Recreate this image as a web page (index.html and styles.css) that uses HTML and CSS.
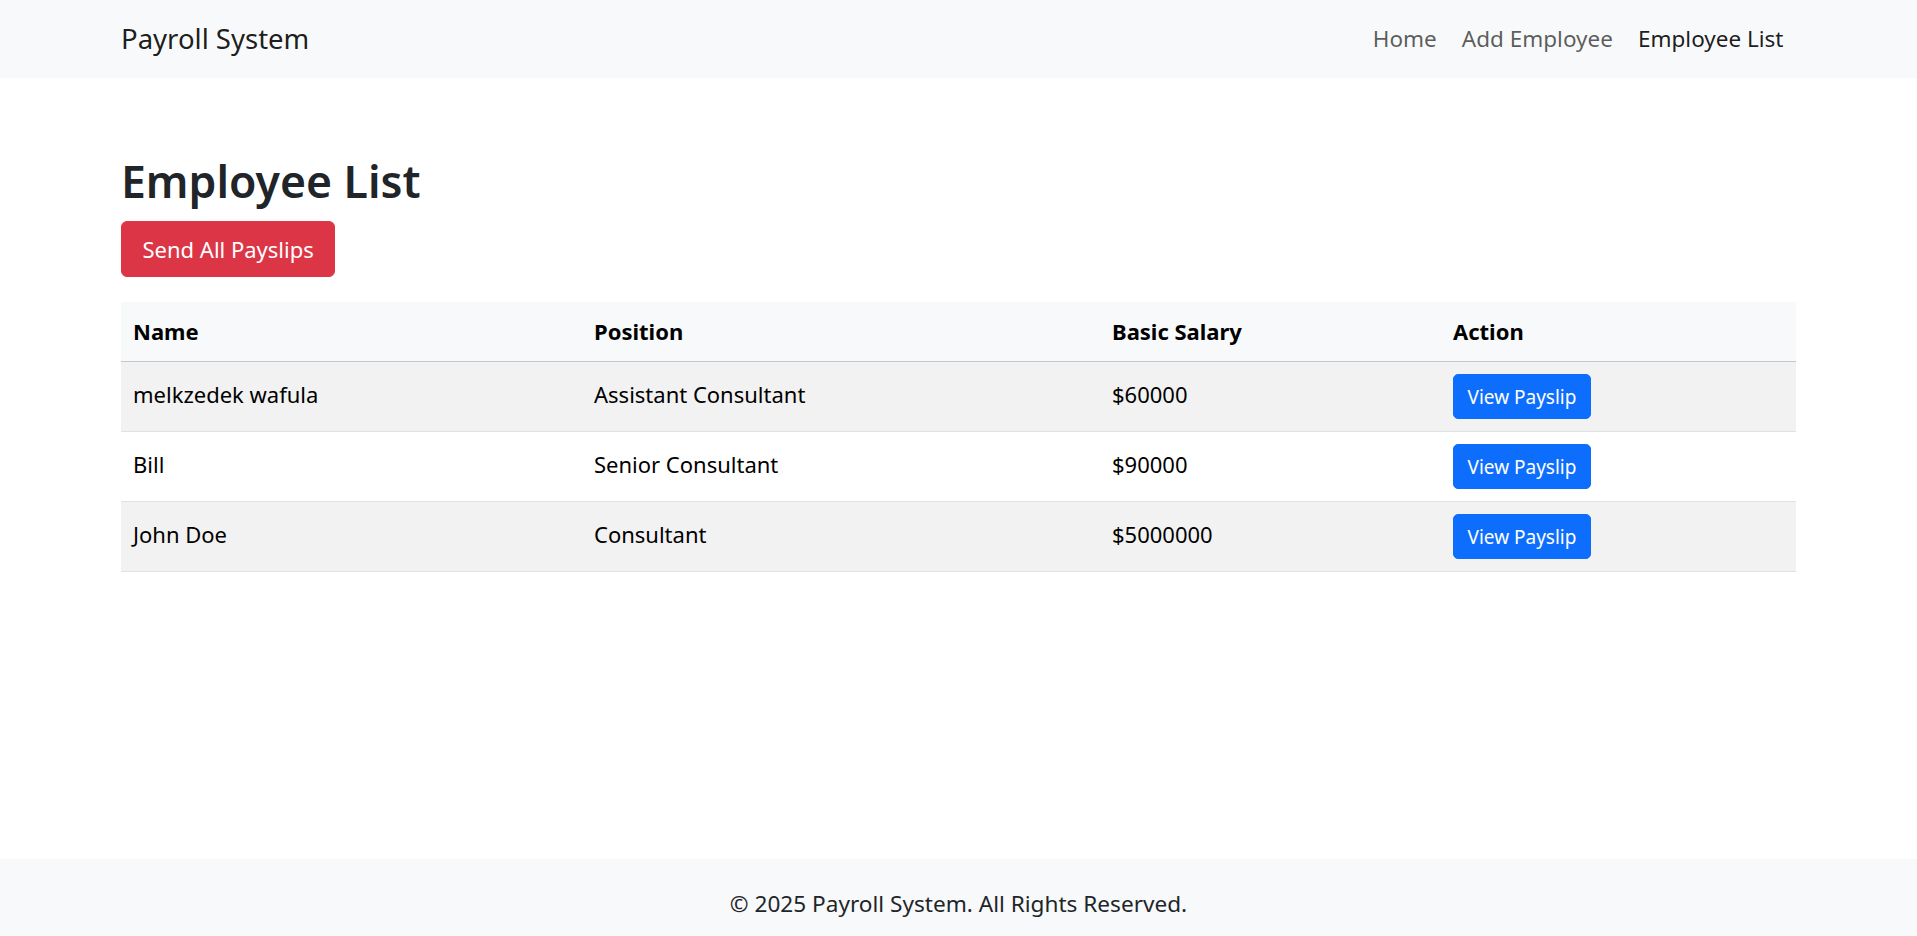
FILE: index.html
```html
<!DOCTYPE html>
<html lang="en">
<head>
<meta charset="utf-8">
<title>Employee List - Payroll System</title>
<link rel="stylesheet" href="styles.css">
</head>
<body>
<nav class="navbar">
  <div class="container nav-inner">
    <a class="brand" href="#">Payroll System</a>
    <ul class="nav-links">
      <li><a class="nav-link" href="#">Home</a></li>
      <li><a class="nav-link" href="#">Add Employee</a></li>
      <li><a class="nav-link active" href="#">Employee List</a></li>
    </ul>
  </div>
</nav>
<main class="container main">
  <h1 class="title">Employee List</h1>
  <button class="btn btn-danger">Send All Payslips</button>
  <table class="table">
    <colgroup>
      <col class="col-name"><col class="col-pos"><col class="col-sal"><col class="col-act">
    </colgroup>
    <thead>
      <tr><th>Name</th><th>Position</th><th>Basic Salary</th><th>Action</th></tr>
    </thead>
    <tbody>
      <tr class="striped"><td>melkzedek wafula</td><td>Assistant Consultant</td><td>$60000</td><td class="cell-action"><a class="btn-sm" href="#">View Payslip</a></td></tr>
      <tr><td>Bill</td><td>Senior Consultant</td><td>$90000</td><td class="cell-action"><a class="btn-sm" href="#">View Payslip</a></td></tr>
      <tr class="striped"><td>John Doe</td><td>Consultant</td><td>$5000000</td><td class="cell-action"><a class="btn-sm" href="#">View Payslip</a></td></tr>
    </tbody>
  </table>
</main>
<footer class="footer">
  <p class="footer-text">© 2025 Payroll System. All Rights Reserved.</p>
</footer>
</body>
</html>
```

FILE: styles.css
```css
* { box-sizing: border-box; }
html, body { margin: 0; padding: 0; }
body {
  font-family: "Noto Sans", "Open Sans", sans-serif;
  font-size: 22px;
  line-height: 1.5;
  color: #212529;
  background: #fff;
  min-height: 100vh;
  display: flex;
  flex-direction: column;
}
.container {
  width: 1675px;
  margin: 0 auto;
}
.navbar {
  background: #f8f9fa;
  height: 78px;
  display: flex;
  align-items: center;
}
.nav-inner {
  display: flex;
  align-items: center;
  justify-content: space-between;
}
.brand {
  font-size: 27.5px;
  color: rgba(0, 0, 0, 0.9);
  text-decoration: none;
  line-height: 1.5;
}
.nav-links {
  list-style: none;
  margin: 0;
  padding: 0;
  display: flex;
}
.nav-link {
  display: block;
  padding: 0 12.5px;
  font-size: 22.5px;
  color: rgba(0, 0, 0, 0.65);
  text-decoration: none;
}
.nav-link.active { color: rgba(0, 0, 0, 0.9); }
.main {
  flex: 1;
  padding-top: 76px;
}
.title {
  margin: 0 0 14px;
  font-size: 44.5px;
  font-weight: 600;
  line-height: 1.2;
  color: #212529;
}
.btn {
  font-family: inherit;
  font-size: 22px;
  line-height: 33px;
  padding: 11px 20.5px 10px;
  border: 1px solid transparent;
  border-radius: 6px;
  cursor: pointer;
}
.btn-danger {
  background: #dc3545;
  border-color: #dc3545;
  color: #fff;
}
.table {
  width: 100%;
  margin-top: 25px;
  border-collapse: collapse;
  table-layout: fixed;
  color: #000;
}
.col-name { width: 461px; }
.col-pos { width: 518px; }
.col-sal { width: 341px; }
.col-act { width: 355px; }
.table th {
  text-align: left;
  font-weight: 700;
  background: #f8f9fa;
  padding: 13px 12px 13px;
  border-bottom: 1px solid #c6c7c8;
}
.table td {
  padding: 16px 12px 0;
  height: 70px;
  vertical-align: top;
  border-bottom: 1px solid #dee2e6;
}
.table td.cell-action { padding-top: 12px; }
.table tr.striped td { background: #f2f2f2; }
.btn-sm {
  display: inline-block;
  font-size: 19px;
  line-height: 28px;
  padding: 7.5px 13.5px;
  border: 1px solid #0d6efd;
  border-radius: 5px;
  background: #0d6efd;
  color: #fff;
  text-decoration: none;
}
.footer {
  background: #f8f9fa;
  padding: 28px 0 15px;
  text-align: center;
}
.footer-text {
  margin: 0;
  font-size: 22.6px;
  color: #212529;
}
```
